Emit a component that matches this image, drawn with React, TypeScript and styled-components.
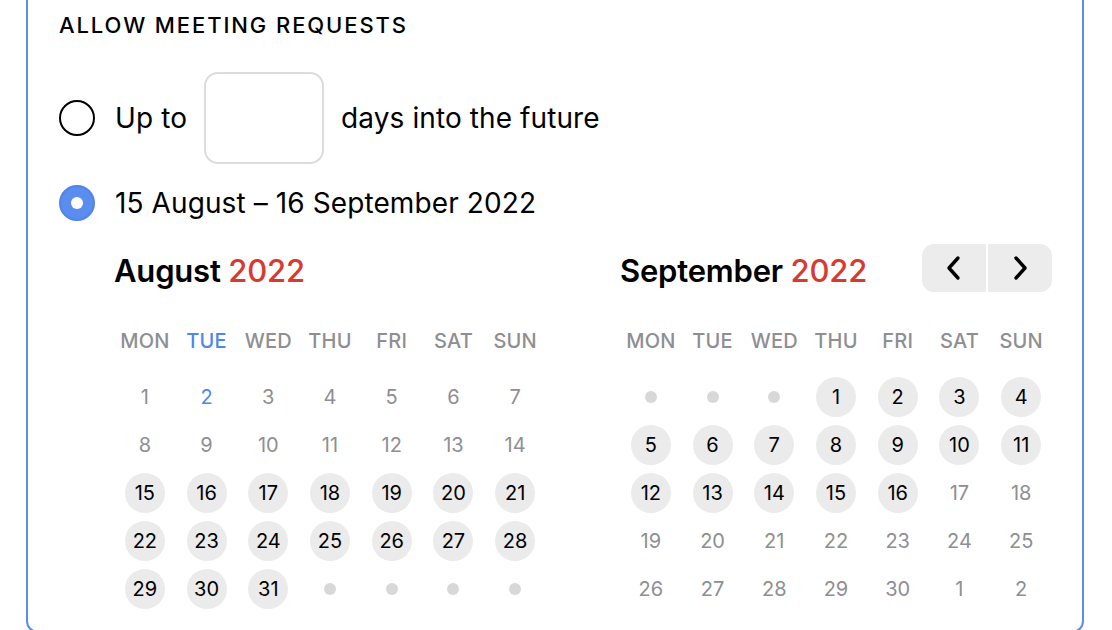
import React from 'react';
import styled, { createGlobalStyle } from 'styled-components';

const GlobalStyle = createGlobalStyle`
  body {
    margin: 0;
    background: #ffffff;
    font-family: Inter, "Noto Sans", sans-serif;
    color: #000000;
    overflow: hidden;
  }
`;

type DayKind = 'past' | 'today' | 'range' | 'empty' | 'after';

interface Day {
  label?: string;
  kind: DayKind;
}

const weekdays = ['MON', 'TUE', 'WED', 'THU', 'FRI', 'SAT', 'SUN'];

const buildAugust = (): Day[] => {
  const days: Day[] = [];
  for (let d = 1; d <= 31; d++) {
    let kind: DayKind = 'past';
    if (d === 2) kind = 'today';
    else if (d >= 15) kind = 'range';
    days.push({ label: String(d), kind });
  }
  for (let i = 0; i < 4; i++) days.push({ kind: 'empty' });
  return days;
};

const buildSeptember = (): Day[] => {
  const days: Day[] = [];
  for (let i = 0; i < 3; i++) days.push({ kind: 'empty' });
  for (let d = 1; d <= 30; d++) {
    days.push({ label: String(d), kind: d <= 16 ? 'range' : 'after' });
  }
  days.push({ label: '1', kind: 'after' });
  days.push({ label: '2', kind: 'after' });
  return days;
};

const Chevron = ({ dir }: { dir: 'left' | 'right' }) => (
  <svg width="16" height="26" viewBox="0 0 16 26" fill="none">
    <path
      d={dir === 'left' ? 'M12 3 L3 13 L12 23' : 'M4 3 L13 13 L4 23'}
      stroke="#000"
      strokeWidth="3.4"
      strokeLinecap="round"
      strokeLinejoin="round"
    />
  </svg>
);

const Calendar = ({ month, days, nav }: { month: string; days: Day[]; nav?: boolean }) => (
  <CalendarBox>
    <MonthHeader>
      <MonthTitle>
        {month} <Year>2022</Year>
      </MonthTitle>
      {nav && (
        <NavGroup>
          <NavButton type="button">
            <Chevron dir="left" />
          </NavButton>
          <NavButton type="button">
            <Chevron dir="right" />
          </NavButton>
        </NavGroup>
      )}
    </MonthHeader>
    <WeekRow>
      {weekdays.map((w, i) => (
        <WeekDay key={w} $active={nav ? false : i === 1}>
          {w}
        </WeekDay>
      ))}
    </WeekRow>
    <DayGrid>
      {days.map((d, i) => (
        <DayCell key={i}>
          {d.kind === 'empty' ? <EmptyDot /> : <DayNum $kind={d.kind}>{d.label}</DayNum>}
        </DayCell>
      ))}
    </DayGrid>
  </CalendarBox>
);

const App = () => {
  return (
    <>
      <GlobalStyle />
      <Card>
        <SectionTitle>ALLOW MEETING REQUESTS</SectionTitle>
        <OptionRow>
          <Radio />
          <OptionText>Up to</OptionText>
          <DaysInput type="text" />
          <OptionText>days into the future</OptionText>
        </OptionRow>
        <OptionRow $tight>
          <Radio $checked />
          <OptionText>15 August – 16 September 2022</OptionText>
        </OptionRow>
        <Calendars>
          <Calendar month="August" days={buildAugust()} />
          <Calendar month="September" days={buildSeptember()} nav />
        </Calendars>
      </Card>
    </>
  );
};

const Card = styled.div`
  margin: -12px 28px 0 26px;
  border: 2px solid #5b8def;
  border-radius: 12px;
  padding: 20px 28px 18px 31px;
`;

const SectionTitle = styled.div`
  font-size: 22px;
  font-weight: 500;
  line-height: 30px;
  letter-spacing: 1.9px;
`;

const OptionRow = styled.div<{ $tight?: boolean }>`
  display: flex;
  align-items: center;
  gap: 17px;
  margin-top: ${(p) => (p.$tight ? '21px' : '32px')};
`;

const Radio = styled.span<{ $checked?: boolean }>`
  box-sizing: border-box;
  width: 36px;
  height: 36px;
  border-radius: 50%;
  flex-shrink: 0;
  margin-right: 3px;
  border: 2px solid ${(p) => (p.$checked ? '#4f84ea' : '#000000')};
  background: ${(p) => (p.$checked ? '#5b8def' : '#ffffff')};
  display: flex;
  align-items: center;
  justify-content: center;
  &::after {
    content: '';
    display: ${(p) => (p.$checked ? 'block' : 'none')};
    width: 12px;
    height: 12px;
    border-radius: 50%;
    background: #ffffff;
  }
`;

const OptionText = styled.span`
  font-size: 28px;
  line-height: 36px;
  letter-spacing: 0.1px;
`;

const DaysInput = styled.input`
  box-sizing: border-box;
  width: 120px;
  height: 92px;
  margin: 0;
  padding: 0;
  border: 2px solid #dcdcdc;
  border-radius: 14px;
  outline: none;
  background: #ffffff;
`;

const Calendars = styled.div`
  display: flex;
  gap: 74px;
  padding-left: 55px;
  margin-top: 23px;
`;

const CalendarBox = styled.div`
  width: 432px;
  display: flex;
  flex-direction: column;
`;

const MonthHeader = styled.div`
  display: flex;
  align-items: center;
  justify-content: space-between;
  height: 48px;
`;

const MonthTitle = styled.div`
  font-size: 31px;
  font-weight: 600;
  letter-spacing: -0.2px;
  padding-top: 4px;
`;

const Year = styled.span`
  color: #d93a30;
  font-weight: 500;
`;

const NavGroup = styled.div`
  display: flex;
  gap: 2px;
`;

const NavButton = styled.button`
  width: 64px;
  height: 48px;
  border: none;
  background: #ececec;
  display: flex;
  align-items: center;
  justify-content: center;
  padding: 0;
  &:first-child {
    border-radius: 12px 0 0 12px;
  }
  &:last-child {
    border-radius: 0 12px 12px 0;
  }
`;

const WeekRow = styled.div`
  display: grid;
  grid-template-columns: repeat(7, 1fr);
  margin-top: 37px;
  height: 24px;
`;

const WeekDay = styled.div<{ $active: boolean }>`
  text-align: center;
  font-size: 20px;
  font-weight: 500;
  line-height: 24px;
  letter-spacing: 0.2px;
  color: ${(p) => (p.$active ? '#4f86ee' : '#8e8e93')};
`;

const DayGrid = styled.div`
  display: grid;
  grid-template-columns: repeat(7, 1fr);
  grid-auto-rows: 48px;
  margin-top: 20px;
`;

const DayCell = styled.div`
  display: flex;
  align-items: center;
  justify-content: center;
`;

const DayNum = styled.span<{ $kind: DayKind }>`
  width: 40px;
  height: 40px;
  border-radius: 50%;
  display: flex;
  align-items: center;
  justify-content: center;
  font-size: 20px;
  background: ${(p) => (p.$kind === 'range' ? '#ebebeb' : 'transparent')};
  color: ${(p) =>
    p.$kind === 'range' ? '#000000' : p.$kind === 'today' ? '#4f86ee' : '#8e8e93'};
`;

const EmptyDot = styled.span`
  width: 12px;
  height: 12px;
  border-radius: 50%;
  background: #d8d8d8;
`;

export default App;
